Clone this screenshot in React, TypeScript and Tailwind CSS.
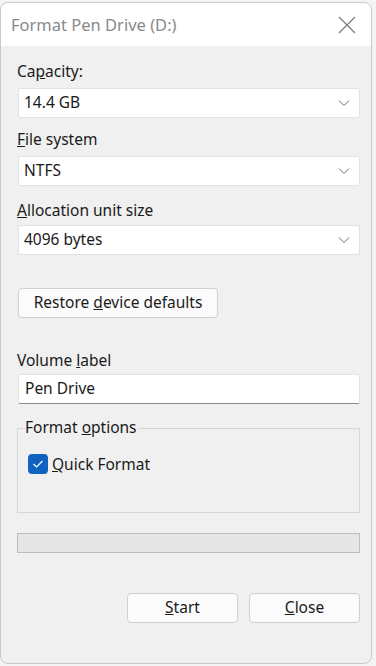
import React from "react";

const font = { fontFamily: '"Noto Sans", "Open Sans", sans-serif' };

function Chevron() {
  return (
    <svg width="12" height="8" viewBox="0 0 12 8" className="mr-[9px]">
      <path d="M1 1.5 L6 6.5 L11 1.5" fill="none" stroke="#6b6b6b" strokeWidth="1" />
    </svg>
  );
}

function Combo({ value }: { value: string }) {
  return (
    <div className="ml-[17px] mr-[11px] h-[30px] bg-white border border-[#e2e2e2] rounded-[2px] flex items-center justify-between pl-[5px]">
      <span className="text-[15.5px] text-[#1a1a1a]">{value}</span>
      <Chevron />
    </div>
  );
}

function Btn({ children, w }: { children: React.ReactNode; w: string }) {
  return (
    <div className={`${w} h-[30px] bg-[#fbfbfb] border border-[#cfcfcf] rounded-[4px] flex items-center justify-center text-[15.5px] text-[#1a1a1a]`}>
      <span>{children}</span>
    </div>
  );
}

export default function App() {
  return (
    <div className="w-[376px] h-[666px] bg-[#f4f4f4] relative overflow-hidden" style={font}>
      <div className="absolute left-0 top-[2px] w-[372px] h-[662px] bg-[#f0f0f0] border border-[#c8c8c8] rounded-[8px] overflow-hidden flex flex-col">
        <div className="h-[43px] bg-white flex items-center justify-between pl-[10px] pr-[15px] shrink-0">
          <span className="text-[16.5px] text-[#8a8a8a] mt-[2px]">Format Pen Drive (D:)</span>
          <svg width="18" height="18" viewBox="0 0 18 18">
            <path d="M1 1 L17 17 M17 1 L1 17" stroke="#7a7a7a" strokeWidth="1.2" />
          </svg>
        </div>

        <div className="pt-[13px] text-[15.5px] text-[#1a1a1a]">
          <div className="px-[16px] h-[24px] leading-[24px]">Ca<u>p</u>acity:</div>
          <div className="mt-[5px]"><Combo value="14.4 GB" /></div>

          <div className="px-[16px] h-[24px] leading-[24px] mt-[9px]"><u>F</u>ile system</div>
          <div className="mt-[5px]"><Combo value="NTFS" /></div>

          <div className="px-[16px] h-[24px] leading-[24px] mt-[12px]"><u>A</u>llocation unit size</div>
          <div className="mt-[3px]"><Combo value="4096 bytes" /></div>

          <div className="mt-[33px] px-[17px]">
            <Btn w="w-[200px]">Restore <u>d</u>evice defaults</Btn>
          </div>

          <div className="px-[16px] h-[24px] leading-[24px] mt-[30px]">Volume <u>l</u>abel</div>
          <div className="ml-[17px] mr-[11px] mt-[2px] h-[30px] bg-white border border-[#e2e2e2] border-b-[#8a8a8a] rounded-[2px] flex items-center pl-[6px]">
            Pen Drive
          </div>

          <div className="relative ml-[16px] mr-[11px] mt-[24px] h-[85px] border border-[#d6d6d6]">
            <div className="absolute left-[7px] -top-[14px] bg-[#f0f0f0] pr-[2px] leading-[24px]">Format <u>o</u>ptions</div>
            <div className="absolute left-[10px] top-[23px] flex items-center">
              <div className="w-[20px] h-[20px] rounded-[4px] bg-[#0f62c0] flex items-center justify-center">
                <svg width="12" height="10" viewBox="0 0 12 10">
                  <path d="M1.5 5 L4.5 8 L10.5 2" fill="none" stroke="white" strokeWidth="1.2" />
                </svg>
              </div>
              <span className="ml-[4px] leading-[24px]"><u>Q</u>uick Format</span>
            </div>
          </div>

          <div className="ml-[16px] mr-[11px] mt-[20px] h-[20px] bg-[#e6e6e6] border border-[#bdbdbd]"></div>

          <div className="mt-[40px] flex justify-end gap-[11px] pr-[11px]">
            <Btn w="w-[111px]"><u>S</u>tart</Btn>
            <Btn w="w-[111px]"><u>C</u>lose</Btn>
          </div>
        </div>
      </div>
    </div>
  );
}
